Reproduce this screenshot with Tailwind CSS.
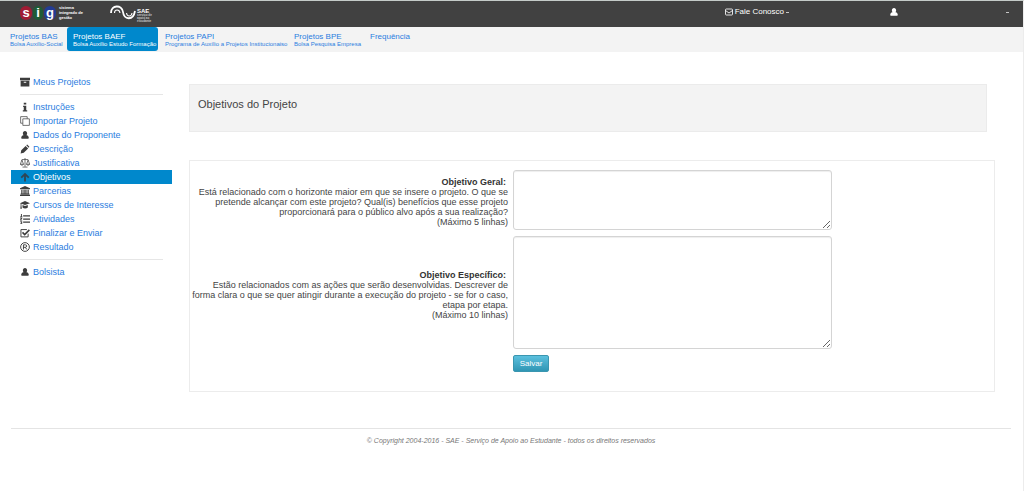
<!DOCTYPE html>
<html lang="pt-BR">
<head>
<meta charset="utf-8">
<meta name="viewport" content="width=device-width, initial-scale=1">
<title>SIG - Objetivos do Projeto</title>
<script src="https://cdn.jsdelivr.net/npm/@tailwindcss/browser@4"></script>
</head>
<body class="min-h-screen bg-white font-['Liberation_Sans',Arial,sans-serif] text-[9px] leading-[10px] text-[#444]">
<svg class="hidden" aria-hidden="true">
  <symbol id="user" viewBox="0 0 16 16"><path d="M8 0c2.600 0 4.300 2 4.300 4.600 0 1.500-.5 2.800-1.300 3.700 3.300.5 4.500 2.700 4.500 5.200 0 1-.7 2-1.600 2H2.100c-.9 0-1.600-1-1.600-2 0-2.500 1.200-4.700 4.500-5.200-.8-.9-1.300-2.200-1.300-3.700C3.700 2 5.400 0 8 0z"/></symbol>
</svg>
<div class="flex min-h-screen flex-col border-t border-r border-t-[#c4cbc8] border-r-[#ececec]">
  <header class="flex h-[26px] items-start bg-[#414141] text-[8px] leading-[10px] text-white">
    <a href="#" class="ml-5 mt-[4px] flex items-center" aria-label="SIG - sistema integrado de gestão">
      <span class="flex w-9 justify-between text-[13px] leading-[13px] font-bold"><span class="h-[14px] w-3 rounded-full bg-[#a01c34] text-center">s</span><span class="h-[14px] w-[10px] rounded-full bg-[#1f5b36] text-center">i</span><span class="h-[14px] w-3 rounded-full bg-[#233c94] text-center">g</span></span>
      <span class="ml-[3px] text-[4px] leading-[5px] font-bold">sistema<br>integrado de<br>gestão</span>
    </a>
    <a href="#" class="ml-[27px] mt-1 flex items-start" aria-label="SAE - Serviço de Apoio ao Estudante">
      <svg class="h-4 w-[27px]" viewBox="0 0 27 16" fill="none" stroke="#fff"><path stroke-width="1.800" d="M1 8C1-.5 12-.5 13 7s10 9.500 12-1"/><path stroke-width="1.100" d="M4.500 8c0-4 5-4 5.500 0M16.500 8c.5 4 5 4 5.500 0"/></svg>
      <span class="mt-[3px] text-[6px] leading-[6px] font-bold">SAE<span class="block text-[3px] leading-[3px] text-white/70">serviço de<br>apoio ao<br>estudante</span></span>
    </a>
    <button class="ml-auto mt-[6px] flex items-center gap-[2px]"><svg class="h-2 w-2" viewBox="0 0 16 14" fill="none" stroke="#fff" stroke-width="1.700"><rect x="1" y="1" width="14" height="12" rx="1.500"/><path d="M1 4l7 5 7-5"/></svg>Fale Conosco<span class="h-px w-[3px] bg-white/70"></span></button>
    <button class="mr-[14px] ml-[101px] mt-[7px] flex w-[119px] items-center justify-between" aria-label="Usuário"><svg class="h-2 w-2 fill-white"><use href="#user"/></svg><span class="h-px w-[3px] bg-white/70"></span></button>
  </header>
  <nav class="flex h-[25px] items-start gap-1 bg-[#f3f3f3] pl-1 text-[8px] leading-[9px] whitespace-nowrap text-[#2a7de0]">
    <a href="#" class="w-[59px] pt-[5px] pl-[6px]">Projetos BAS<span class="block text-[6px] leading-[6px]">Bolsa Auxílio-Social</span></a>
    <a href="#" class="h-[24px] w-[91px] rounded-[3px] bg-[#0088cc] pt-[5px] pl-[6px] text-white">Projetos BAEF<span class="block text-[6px] leading-[6px]">Bolsa Auxílio Estudo Formação</span></a>
    <a href="#" class="w-[125px] pt-[5px] pl-[3px]">Projetos PAPI<span class="block text-[6px] leading-[6px]">Programa de Auxílio a Projetos Institucionaiso</span></a>
    <a href="#" class="w-[72px] pt-[5px] pl-[3px]">Projetos BPE<span class="block text-[6px] leading-[6px]">Bolsa Pesquisa Empresa</span></a>
    <a href="#" class="pt-[5px] pl-[3px]">Frequência</a>
  </nav>
  <div class="flex items-start pt-[23px] pr-7">
    <aside class="mr-[17px] ml-[11px] w-[161px] shrink-0 text-[#2a7de0]">
      <a href="#" class="flex h-[14px] items-center gap-[3px] pl-[9px]"><svg class="h-[10px] w-[10px] fill-[#3d3d3d]" viewBox="0 0 16 16"><path d="M0 1h16v4H0zM1 6h14v9H1zM6 7.500v1.500h4V7.500z" fill-rule="evenodd"/></svg>Meus Projetos</a>
      <hr class="mx-[9px] my-[5px] border-[#e6e6e6]">
      <a href="#" class="flex h-[14px] items-center gap-[3px] pl-[9px]"><svg class="h-[10px] w-[10px] fill-[#3d3d3d]" viewBox="0 0 16 16"><path d="M6 1h4v3H6zM5 6h5v7h1.500v2h-7v-2H6V8H5z"/></svg>Instruções</a>
      <a href="#" class="flex h-[14px] items-center gap-[3px] pl-[9px]"><svg class="h-[10px] w-[10px]" viewBox="0 0 16 16" fill="none" stroke="#555" stroke-width="1.300"><path d="M4.500 4.500H15V15H4.500zM4.500 11.500H1V1h10.500v3.500"/></svg>Importar Projeto</a>
      <a href="#" class="flex h-[14px] items-center gap-[3px] pl-[9px]"><svg class="h-[10px] w-[10px] fill-[#3d3d3d] p-px"><use href="#user"/></svg>Dados do Proponente</a>
      <a href="#" class="flex h-[14px] items-center gap-[3px] pl-[9px]"><svg class="h-[10px] w-[10px] fill-[#3d3d3d]" viewBox="0 0 16 16"><path d="M2 10l7-7 4 4-7 7-5 1zM10 2l1.500-1.200L15 4.500 14 6z"/></svg>Descrição</a>
      <a href="#" class="flex h-[14px] items-center gap-[3px] pl-[9px]"><svg class="h-[10px] w-[10px]" viewBox="0 0 16 16" fill="none" stroke="#444" stroke-width="1.200"><path d="M8 0v14M4 14.500h8M3 2.500h10M3 3L.6 10h5zM13 3l-2.600 7h5zM.6 10c.5 2 4.500 2 5 0M10.400 10c.5 2 4.500 2 5 0"/></svg>Justificativa</a>
      <a href="#" aria-current="page" class="flex h-[14px] items-center gap-[3px] bg-[#0088cc] pl-[9px] text-white"><svg class="h-[10px] w-[10px] fill-[#2f4656]" viewBox="0 0 16 16"><path d="M8 1l7 7-2 2-3.500-3.200V15h-3V6.800L3 10 1 8z"/></svg>Objetivos</a>
      <a href="#" class="flex h-[14px] items-center gap-[3px] pl-[9px]"><svg class="h-[10px] w-[10px] fill-[#3d3d3d]" viewBox="0 0 16 16"><path d="M8 0l8 3.500V5H0V3.500zM2 6h2v6h1.500V6h2v6h1V6h2v6H12V6h2v6h1v1.500H1V12h1zM0 14h16v2H0z"/></svg>Parcerias</a>
      <a href="#" class="flex h-[14px] items-center gap-[3px] pl-[9px]"><svg class="h-[10px] w-[10px] fill-[#3d3d3d]" viewBox="0 0 16 16"><path d="M8 1.500L16 5 8 8 2.300 6v3L3 14H.5L1 9V5.500L0 5zM4 8l4 1.600L12.500 8v4c-2 2-6.500 2-8.500 0z"/></svg>Cursos de Interesse</a>
      <a href="#" class="flex h-[14px] items-center gap-[3px] pl-[9px]"><svg class="h-[10px] w-[10px] fill-[#3d3d3d]" viewBox="0 0 16 16"><path d="M5 2h11v2H5zM5 7h11v2H5zM5 12h11v2H5zM1.500 0H3v4h1v1H0V4h1.500zM0 6h3.500v2L1.500 9.500h2v1H0V9l2-2H0zM0 11.500h3.500V16H0v-1h2v-1H1v-.8h1v-.7H0z"/></svg>Atividades</a>
      <a href="#" class="flex h-[14px] items-center gap-[3px] pl-[9px]"><svg class="h-[10px] w-[10px]" viewBox="0 0 16 16" fill="none" stroke="#3d3d3d"><path stroke-width="1.500" d="M13 9v5.200H1.500V2.500H11"/><path stroke-width="2.500" d="M4 7l3.500 3.500L15 3"/></svg>Finalizar e Enviar</a>
      <a href="#" class="flex h-[14px] items-center gap-[3px] pl-[9px]"><svg class="h-[10px] w-[10px]" viewBox="0 0 16 16" fill="none" stroke="#3d3d3d" stroke-width="1.500"><circle cx="8" cy="8" r="7"/><path d="M5.500 12V4.500h3c3 0 3 4 0 4h-3M8.500 8.500L11 12"/></svg>Resultado</a>
      <hr class="mx-[9px] my-[5px] border-[#e6e6e6]">
      <a href="#" class="flex h-[14px] items-center gap-[3px] pl-[9px]"><svg class="h-[10px] w-[10px] fill-[#3d3d3d] p-px"><use href="#user"/></svg>Bolsista</a>
    </aside>
    <main class="min-w-0 flex-1 pt-[9px]">
      <div class="mr-2 border border-[#ebebeb] bg-[#f3f3f3] px-2 pt-3 pb-5">
        <h1 class="text-[11px] leading-[14px]">Objetivos do Projeto</h1>
      </div>
      <form class="mt-7 grid grid-cols-[318px_319px] items-center gap-x-[5px] gap-y-[6px] border border-[#ececec] pt-[9px] pb-[19px]">
        <label for="geral" class="flex flex-col items-end pt-1 whitespace-nowrap"><b class="mr-[2px] text-[#333]">Objetivo Geral:</b><span class="text-right">Está relacionado com o horizonte maior em que se insere o projeto. O que se<br>pretende alcançar com este projeto? Qual(is) benefícios que esse projeto<br>proporcionará para o público alvo após a sua realização?<br>(Máximo 5 linhas)</span></label>
        <textarea id="geral" class="block h-[60px] w-full resize rounded-[3px] border border-[#d4d4d4] p-1 shadow-[inset_0_1px_1px_rgba(0,0,0,0.07)]"></textarea>
        <label for="especifico" class="flex flex-col items-end pt-1 whitespace-nowrap"><b class="mr-[2px] text-[#333]">Objetivo Específico:</b><span class="text-right">Estão relacionados com as ações que serão desenvolvidas. Descrever de<br>forma clara o que se quer atingir durante a execução do projeto - se for o caso,<br>etapa por etapa.<br>(Máximo 10 linhas)</span></label>
        <textarea id="especifico" class="block h-[113px] w-full resize rounded-[3px] border border-[#d4d4d4] p-1 shadow-[inset_0_1px_1px_rgba(0,0,0,0.07)]"></textarea>
        <button type="submit" class="col-start-2 h-[17px] w-9 rounded-[2px] border border-[#3a96b0] bg-linear-to-b from-[#5bc0de] to-[#2f96b4] text-[8px] text-white">Salvar</button>
      </form>
    </main>
  </div>
  <footer class="mt-9 mr-3 ml-[11px] border-t border-[#e4e4e4] pt-[7px] text-center text-[7px] text-[#777] italic">© Copyright 2004-2016 - SAE - Serviço de Apoio ao Estudante - todos os direitos reservados</footer>
</div>
</body>
</html>
